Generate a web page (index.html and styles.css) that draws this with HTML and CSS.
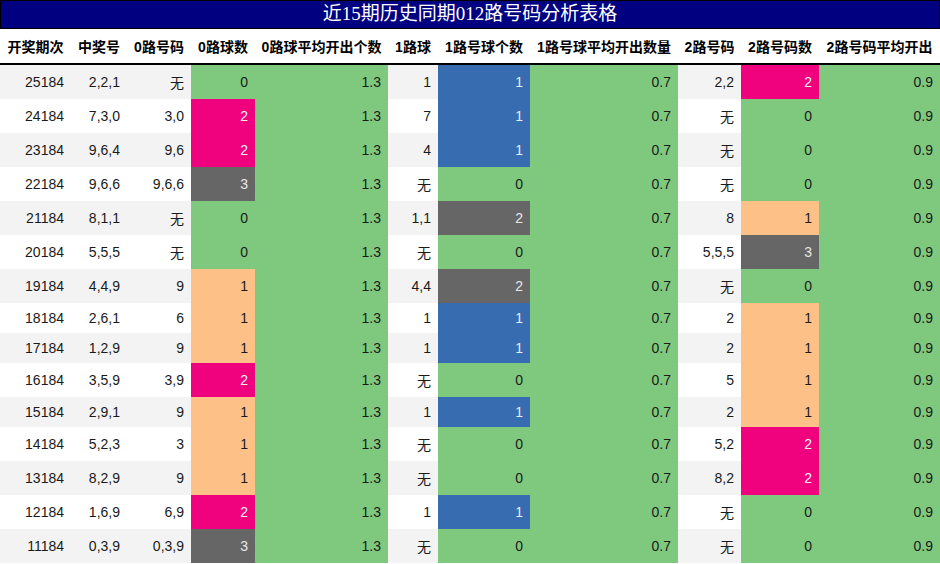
FILE: index.html
```html
<!DOCTYPE html>
<html>
<head>
<meta charset="utf-8">
<link rel="stylesheet" href="styles.css">
</head>
<body>
<div class="wrap">
  <div class="title">近15期历史同期012路号码分析表格</div>
  <table class="grid">
    <colgroup>
      <col class="w71"><col class="w56"><col class="w64"><col class="w64"><col class="w133"><col class="w50"><col class="w92"><col class="w148"><col class="w63"><col class="w78"><col class="w121">
    </colgroup>
    <thead>
      <tr><th>开奖期次</th><th>中奖号</th><th>0路号码</th><th>0路球数</th><th>0路球平均开出个数</th><th>1路球</th><th>1路号球个数</th><th>1路号球平均开出数量</th><th>2路号码</th><th>2路号码数</th><th>2路号码平均开出</th></tr>
    </thead>
    <tbody>
      <tr><td>25184</td><td>2,2,1</td><td>无</td><td class="g">0</td><td class="g">1.3</td><td>1</td><td class="b">1</td><td class="g">0.7</td><td>2,2</td><td class="p">2</td><td class="g">0.9</td></tr>
      <tr><td>24184</td><td>7,3,0</td><td>3,0</td><td class="p">2</td><td class="g">1.3</td><td>7</td><td class="b">1</td><td class="g">0.7</td><td>无</td><td class="g">0</td><td class="g">0.9</td></tr>
      <tr><td>23184</td><td>9,6,4</td><td>9,6</td><td class="p">2</td><td class="g">1.3</td><td>4</td><td class="b">1</td><td class="g">0.7</td><td>无</td><td class="g">0</td><td class="g">0.9</td></tr>
      <tr><td>22184</td><td>9,6,6</td><td>9,6,6</td><td class="k">3</td><td class="g">1.3</td><td>无</td><td class="g">0</td><td class="g">0.7</td><td>无</td><td class="g">0</td><td class="g">0.9</td></tr>
      <tr><td>21184</td><td>8,1,1</td><td>无</td><td class="g">0</td><td class="g">1.3</td><td>1,1</td><td class="k">2</td><td class="g">0.7</td><td>8</td><td class="o">1</td><td class="g">0.9</td></tr>
      <tr><td>20184</td><td>5,5,5</td><td>无</td><td class="g">0</td><td class="g">1.3</td><td>无</td><td class="g">0</td><td class="g">0.7</td><td>5,5,5</td><td class="k">3</td><td class="g">0.9</td></tr>
      <tr><td>19184</td><td>4,4,9</td><td>9</td><td class="o">1</td><td class="g">1.3</td><td>4,4</td><td class="k">2</td><td class="g">0.7</td><td>无</td><td class="g">0</td><td class="g">0.9</td></tr>
      <tr><td>18184</td><td>2,6,1</td><td>6</td><td class="o">1</td><td class="g">1.3</td><td>1</td><td class="b">1</td><td class="g">0.7</td><td>2</td><td class="o">1</td><td class="g">0.9</td></tr>
      <tr><td>17184</td><td>1,2,9</td><td>9</td><td class="o">1</td><td class="g">1.3</td><td>1</td><td class="b">1</td><td class="g">0.7</td><td>2</td><td class="o">1</td><td class="g">0.9</td></tr>
      <tr><td>16184</td><td>3,5,9</td><td>3,9</td><td class="p">2</td><td class="g">1.3</td><td>无</td><td class="g">0</td><td class="g">0.7</td><td>5</td><td class="o">1</td><td class="g">0.9</td></tr>
      <tr><td>15184</td><td>2,9,1</td><td>9</td><td class="o">1</td><td class="g">1.3</td><td>1</td><td class="b">1</td><td class="g">0.7</td><td>2</td><td class="o">1</td><td class="g">0.9</td></tr>
      <tr><td>14184</td><td>5,2,3</td><td>3</td><td class="o">1</td><td class="g">1.3</td><td>无</td><td class="g">0</td><td class="g">0.7</td><td>5,2</td><td class="p">2</td><td class="g">0.9</td></tr>
      <tr><td>13184</td><td>8,2,9</td><td>9</td><td class="o">1</td><td class="g">1.3</td><td>无</td><td class="g">0</td><td class="g">0.7</td><td>8,2</td><td class="p">2</td><td class="g">0.9</td></tr>
      <tr><td>12184</td><td>1,6,9</td><td>6,9</td><td class="p">2</td><td class="g">1.3</td><td>1</td><td class="b">1</td><td class="g">0.7</td><td>无</td><td class="g">0</td><td class="g">0.9</td></tr>
      <tr><td>11184</td><td>0,3,9</td><td>0,3,9</td><td class="k">3</td><td class="g">1.3</td><td>无</td><td class="g">0</td><td class="g">0.7</td><td>无</td><td class="g">0</td><td class="g">0.9</td></tr>
    </tbody>
  </table>
</div>
</body>
</html>
```
FILE: styles.css
```css
html, body {
  margin: 0;
  padding: 0;
  background: #fff;
}
.wrap {
  width: 940px;
}
.title {
  box-sizing: border-box;
  height: 29px;
  border: 1px solid #000;
  background: #000080;
  color: #fff;
  font-family: "Liberation Serif", "Noto Sans CJK SC", serif;
  font-size: 19px;
  line-height: 26px;
  text-align: center;
}
.grid {
  width: 940px;
  table-layout: fixed;
  border-collapse: separate;
  border-spacing: 0;
  font-family: "Liberation Sans", "Noto Sans CJK SC", sans-serif;
  font-size: 14px;
  color: #1a1a1a;
}
.w71 { width: 71px; }
.w56 { width: 56px; }
.w64 { width: 64px; }
.w133 { width: 133px; }
.w50 { width: 50px; }
.w92 { width: 92px; }
.w148 { width: 148px; }
.w63 { width: 63px; }
.w78 { width: 78px; }
.w121 { width: 121px; }
.grid th {
  padding: 7px 0 7px;
  font-weight: bold;
  color: #000;
  text-align: center;
  white-space: nowrap;
  overflow: hidden;
  border-bottom: 2px solid #000;
  background: #fff;
}
.grid td {
  padding: 7px 7px;
  text-align: right;
  white-space: nowrap;
}
.grid tbody tr:nth-child(odd) td { background: #f3f3f3; }
.grid tbody tr:nth-child(even) td { background: #fff; }
.grid tbody tr td.g { background: #7fc97f; }
.grid tbody tr td.o { background: #fdc086; }
.grid tbody tr td.p { background: #f0027f; color: #f2f2f2; }
.grid tbody tr td.k { background: #666666; color: #e8e8e8; }
.grid tbody tr td.b { background: #386cb0; color: #e8eef8; }
```
